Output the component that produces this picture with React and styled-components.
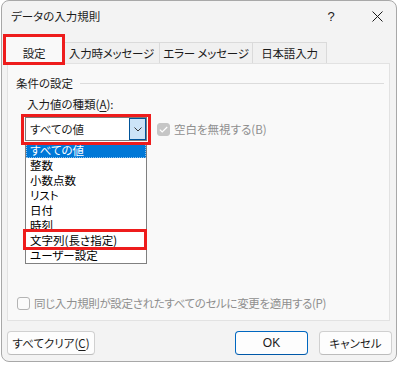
import React from 'react';
import styled, { createGlobalStyle, css } from 'styled-components';

const GlobalStyle = createGlobalStyle`
  body {
    margin: 0;
    background: #ffffff;
    font-family: "Noto Sans CJK JP", "Noto Sans", sans-serif;
    font-size: 11.5px;
    color: #1b1b1b;
    font-feature-settings: "palt" 1;
  }
`;

// red annotation frame drawn over a part
const marked = css`
  position: relative;
  &::after {
    content: '';
    position: absolute;
    inset: ${(p) => p.$mark};
    border: 3px solid #ee1c1c;
    pointer-events: none;
    z-index: 5;
  }
`;

const Window = styled.div`
  box-sizing: border-box;
  margin-left: 1px;
  width: 396px;
  height: 362px;
  border: 1px solid #a8a8a8;
  border-radius: 8px;
  background: #f3f3f3;
  display: flex;
  flex-direction: column;
`;

const TitleBar = styled.div`
  height: 30px;
  display: flex;
  align-items: center;
  padding-left: 9px;
  padding-bottom: 2px;
`;

const Title = styled.div`
  flex: 1;
  font-size: 11.5px;
`;

const HelpButton = styled.div`
  width: 28px;
  margin-right: 13px;
  text-align: center;
  font-size: 13px;
  font-family: "Liberation Sans", sans-serif;
`;

const CloseButton = styled.div`
  width: 38px;
  display: flex;
  justify-content: center;
  align-items: center;
`;

const TabStrip = styled.div`
  height: 30px;
  display: flex;
  align-items: flex-end;
  padding-left: 3px;
  position: relative;
  z-index: 2;
`;

const Tab = styled.div`
  box-sizing: border-box;
  width: ${(p) => p.$w}px;
  height: ${(p) => (p.$active ? 28 : 21)}px;
  margin-bottom: ${(p) => (p.$active ? -1 : 0)}px;
  margin-left: -1px;
  border: 1px solid #dadada;
  border-bottom: none;
  background: ${(p) => (p.$active ? '#f9f9f9' : '#f0f0f0')};
  display: flex;
  justify-content: center;
  align-items: center;
  padding-top: ${(p) => (p.$active ? 4 : 0)}px;
  white-space: nowrap;
  letter-spacing: -0.2px;
  ${(p) => p.$mark && marked}
`;

const Panel = styled.div`
  box-sizing: border-box;
  height: 258px;
  margin: 0 6px 0 5px;
  border: 1px solid #e2e2e2;
  background: #f9f9f9;
  padding: 11px 5px 9px 8px;
  display: flex;
  flex-direction: column;
`;

const GroupHeader = styled.div`
  display: flex;
  align-items: center;
  gap: 7px;
  line-height: 16px;
  &::after {
    content: '';
    flex: 1;
    height: 1px;
    background: #dcdcdc;
  }
`;

const FieldLabel = styled.div`
  margin: 5px 0 0 11px;
  line-height: 16px;
`;

const Key = styled.span`
  text-decoration: underline;
  text-underline-offset: 2px;
`;

const FieldRow = styled.div`
  margin: 5px 0 0 9px;
  display: flex;
  align-items: center;
  gap: 10px;
`;

const Combo = styled.div`
  box-sizing: border-box;
  width: 122px;
  height: 24px;
  border: 1px solid #7a7a7a;
  background: #ffffff;
  display: flex;
  align-items: center;
  ${marked}
`;

const ComboText = styled.div`
  flex: 1;
  padding-left: 4px;
`;

const DropButton = styled.div`
  box-sizing: border-box;
  width: 17px;
  height: 22px;
  border: 1px solid #005499;
  background: #cce4f7;
  display: flex;
  align-items: center;
  justify-content: center;
`;

const DropList = styled.ul`
  position: absolute;
  left: -1px;
  top: 24px;
  box-sizing: border-box;
  width: 122px;
  margin: 0;
  padding: 0;
  list-style: none;
  background: #ffffff;
  border: 1px solid #808080;
  z-index: 3;
`;

const Option = styled.li`
  height: 15px;
  line-height: 15px;
  padding-left: 4px;
  white-space: nowrap;
  background: ${(p) => (p.$selected ? '#0078d7' : 'transparent')};
  color: ${(p) => (p.$selected ? '#ffffff' : '#000000')};
  outline: ${(p) => (p.$selected ? '1px dotted #8fc0ea' : 'none')};
  outline-offset: -1px;
  ${(p) => p.$mark && marked}
`;

const Check = styled.label`
  display: flex;
  align-items: center;
  gap: 4px;
  color: #8f8f8f;
  line-height: 16px;
`;

const Box = styled.span`
  box-sizing: border-box;
  width: 13px;
  height: 13px;
  border-radius: 3px;
  border: 1px solid ${(p) => (p.$checked ? '#c6c6c6' : '#b4b4b4')};
  background: ${(p) => (p.$checked ? '#c6c6c6' : '#fbfbfb')};
  display: flex;
  align-items: center;
  justify-content: center;
`;

const BottomCheck = styled(Check)`
  margin: auto 0 0 1px;
  letter-spacing: -0.35px;
`;

const ButtonRow = styled.div`
  display: flex;
  gap: 11px;
  padding: 10px 4px 0 5px;
`;

const Button = styled.div`
  box-sizing: border-box;
  width: ${(p) => p.$w}px;
  height: 24px;
  border: 1px solid ${(p) => (p.$primary ? '#0067c0' : '#d0d0d0')};
  border-bottom-color: ${(p) => (p.$primary ? '#0058a8' : '#bcbcbc')};
  border-radius: 4px;
  background: #fdfdfd;
  display: flex;
  align-items: center;
  justify-content: center;
  font-family: ${(p) => (p.$latin ? '"Liberation Sans", sans-serif' : 'inherit')};
  font-size: ${(p) => (p.$latin ? 12 : 11.5)}px;
  ${(p) => p.$push && 'margin-left: auto;'}
`;

const options = ['すべての値', '整数', '小数点数', 'リスト', '日付', '時刻', '文字列(長さ指定)', 'ユーザー設定'];

export default function App() {
  return (
    <>
      <GlobalStyle />
      <Window>
        <TitleBar>
          <Title>データの入力規則</Title>
          <HelpButton>?</HelpButton>
          <CloseButton>
            <svg width="11" height="11" viewBox="0 0 11 11">
              <path d="M0.5 0.5 L10.5 10.5 M10.5 0.5 L0.5 10.5" stroke="#1b1b1b" strokeWidth="1" />
            </svg>
          </CloseButton>
        </TitleBar>
        <TabStrip>
          <Tab $w={60} $active $mark="-3px -2px -1px -2px">設定</Tab>
          <Tab $w={97}>入力時メッセージ</Tab>
          <Tab $w={94}>エラー メッセージ</Tab>
          <Tab $w={75}>日本語入力</Tab>
        </TabStrip>
        <Panel>
          <GroupHeader>条件の設定</GroupHeader>
          <FieldLabel>
            入力値の種類(<Key>A</Key>):
          </FieldLabel>
          <FieldRow>
            <Combo $mark="-4px -5px -5px -5px">
              <ComboText>すべての値</ComboText>
              <DropButton>
                <svg width="8" height="5" viewBox="0 0 8 5">
                  <path d="M0.5 0.5 L4 4 L7.5 0.5" fill="none" stroke="#3a3a3a" strokeWidth="1" />
                </svg>
              </DropButton>
              <DropList>
                {options.map((o, i) => (
                  <Option key={o} $selected={i === 0} $mark={i === 6 ? '-4px -1px -2px -3px' : undefined}>
                    {o}
                  </Option>
                ))}
              </DropList>
            </Combo>
            <Check>
              <Box $checked>
                <svg width="9" height="7" viewBox="0 0 9 7">
                  <path d="M0.8 3.6 L3.2 6 L8.2 1" fill="none" stroke="#ffffff" strokeWidth="1.2" />
                </svg>
              </Box>
              空白を無視する(B)
            </Check>
          </FieldRow>
          <BottomCheck>
            <Box />
            同じ入力規則が設定されたすべてのセルに変更を適用する(P)
          </BottomCheck>
        </Panel>
        <ButtonRow>
          <Button $w={88}>
            すべてクリア(<Key>C</Key>)
          </Button>
          <Button $w={73} $primary $latin $push>
            OK
          </Button>
          <Button $w={73}>キャンセル</Button>
        </ButtonRow>
      </Window>
    </>
  );
}
